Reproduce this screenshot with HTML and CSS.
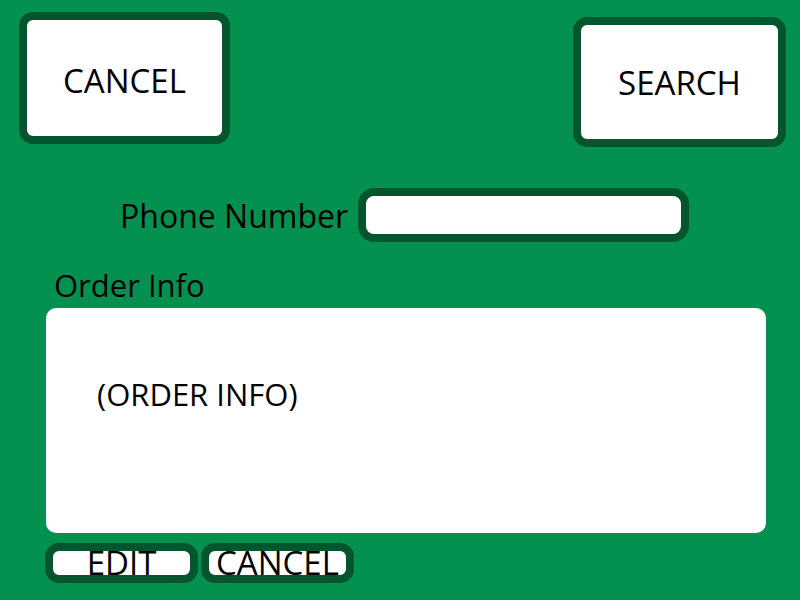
FILE: index.html
```html
<!DOCTYPE html>
<html lang="en">
<head>
    <meta charset="UTF-8">
    <meta name="viewport" content="width=device-width, initial-scale=1.0">
    <title>Order Lookup</title>
    <link rel="stylesheet" href="styles.css">
</head>
<body>
    <div class="screen">
        <div class="top-bar">
            <button type="button" class="big-btn cancel-btn">CANCEL</button>
            <button type="button" class="big-btn search-btn">SEARCH</button>
        </div>

        <div class="phone-row">
            <label for="phone" class="phone-label">Phone Number</label>
            <input type="text" id="phone" class="phone-input">
        </div>

        <div class="order-label">Order Info</div>
        <div class="order-box">
            <p class="order-text">(ORDER INFO)</p>
        </div>

        <div class="actions">
            <button type="button" class="small-btn">EDIT</button>
            <button type="button" class="small-btn">CANCEL</button>
        </div>
    </div>
</body>
</html>
```

FILE: styles.css
```css
* {
    margin: 0;
    padding: 0;
    box-sizing: border-box;
}

body {
    font-family: 'Open Sans', 'Liberation Sans', sans-serif;
    background: #049150;
    color: #000;
    width: 800px;
    height: 600px;
    overflow: hidden;
}

.screen {
    padding: 12px 14px 0 19px;
}

.top-bar {
    display: flex;
    justify-content: space-between;
    align-items: flex-start;
}

.big-btn {
    background: #fff;
    border: 8px solid #02552d;
    border-radius: 14px;
    font-family: inherit;
    font-size: 33px;
    color: #000;
    display: flex;
    align-items: center;
    justify-content: center;
}

.cancel-btn {
    width: 211px;
    height: 132px;
    padding-top: 4px;
}

.search-btn {
    width: 213px;
    height: 130px;
    margin-top: 5px;
}

.phone-row {
    display: flex;
    align-items: center;
    gap: 10px;
    margin-top: 41px;
    margin-left: 101px;
}

.phone-label {
    font-size: 32px;
}

.phone-input {
    width: 331px;
    height: 54px;
    border: 8px solid #02552d;
    border-radius: 16px;
    background: #fff;
    outline: none;
}

.order-label {
    font-size: 31px;
    line-height: 40px;
    margin-top: 23px;
    margin-left: 35px;
}

.order-box {
    background: #fff;
    width: 720px;
    height: 225px;
    margin-top: 3px;
    margin-left: 27px;
    border-radius: 10px;
    padding: 66px 0 0 51px;
}

.order-text {
    font-size: 31px;
    line-height: 40px;
}

.actions {
    display: flex;
    gap: 3px;
    margin-top: 10px;
    margin-left: 26px;
}

.small-btn {
    width: 153px;
    height: 40px;
    background: #fff;
    border: 8px solid #02552d;
    border-radius: 14px;
    font-family: inherit;
    font-size: 33px;
    line-height: 24px;
    color: #000;
    display: flex;
    align-items: center;
    justify-content: center;
    overflow: visible;
}
```
